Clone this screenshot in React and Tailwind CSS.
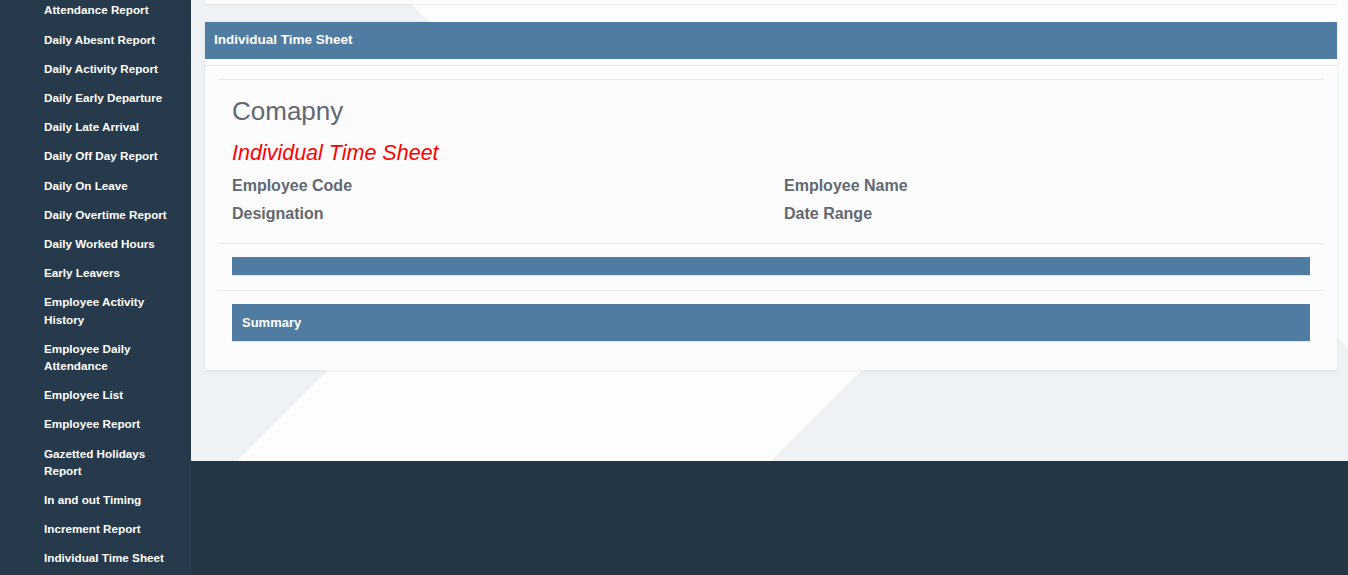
const reports = [
  "Attendance Report",
  "Daily Abesnt Report",
  "Daily Activity Report",
  "Daily Early Departure",
  "Daily Late Arrival",
  "Daily Off Day Report",
  "Daily On Leave",
  "Daily Overtime Report",
  "Daily Worked Hours",
  "Early Leavers",
  "Employee Activity History",
  "Employee Daily Attendance",
  "Employee List",
  "Employee Report",
  "Gazetted Holidays Report",
  "In and out Timing",
  "Increment Report",
  "Individual Time Sheet",
];

function Sidebar() {
  return (
    <aside className="w-[191px] shrink-0 overflow-hidden bg-[#263a4c]">
      <ul className="-mt-[4.6px]">
        {reports.map((name) => (
          <li
            key={name}
            className="pl-[44px] pr-[11px] py-[6px] text-[11.7px] leading-[17.2px] font-bold text-white"
          >
            {name}
          </li>
        ))}
      </ul>
    </aside>
  );
}

function Backdrop() {
  return (
    <svg
      className="absolute inset-0 h-full w-full"
      viewBox="0 0 1157 461"
      preserveAspectRatio="none"
    >
      <rect width="1157" height="461" fill="#eef2f4" />
      <polygon
        points="216,0 361,146 46,461 580,461 925,116 1157,348 1157,0"
        fill="#fcfdfd"
      />
    </svg>
  );
}

export default function App() {
  return (
    <div
      className="flex h-[575px] w-[1348px] overflow-hidden"
      style={{ fontFamily: '"Liberation Sans", Arial, sans-serif' }}
    >
      <Sidebar />
      <div className="flex flex-1 flex-col">
        <main className="relative h-[461px]">
          <Backdrop />
          <div className="relative pl-[14px] pr-[11px]">
            <div className="h-[4px] bg-[#fdfdfe] shadow-[0_1px_3px_rgba(0,0,0,0.07)]" />

            <div className="mt-[18px] bg-[#fcfcfe] shadow-[0_1px_4px_rgba(0,0,0,0.08)]">
              <div className="flex h-[37px] items-center bg-[#507ca1] pl-[9px] text-[13.5px] font-bold text-white">
                Individual Time Sheet
              </div>
              <div className="h-[7px] border-b border-[#e6e9ed] bg-white" />

              <div className="px-[13px] pt-[13px]">
                <div className="border-t border-[#e7e9ec]" />
                <div className="px-[14px] pt-[17px] pb-[15px] text-[#62686f]">
                  <div className="text-[26px] leading-[29px]">Comapny</div>
                  <div className="mt-[15px] text-[21.5px] leading-[24px] italic text-[#ff0000]">
                    Individual Time Sheet
                  </div>
                  <div className="mt-[7px] grid grid-cols-[552px_1fr] text-[16px] leading-[28px] font-bold">
                    <div>Employee Code</div>
                    <div>Employee Name</div>
                    <div>Designation</div>
                    <div>Date Range</div>
                  </div>
                </div>

                <div className="border-t border-[#e7e9ec]" />
                <div className="px-[14px] pt-[13px] pb-[14px]">
                  <div className="h-[19px] border-b border-[#dfe6ec] bg-[#507ca1]" />
                </div>

                <div className="border-t border-[#e7e9ec]" />
                <div className="px-[14px] pt-[13px] pb-[28px]">
                  <div className="flex h-[38px] items-center border-b border-[#dfe6ec] bg-[#507ca1] pl-[10px] text-[13px] font-bold text-white">
                    Summary
                  </div>
                </div>
              </div>
            </div>
          </div>
        </main>
        <footer className="flex-1 bg-[#243546]" />
      </div>
    </div>
  );
}
